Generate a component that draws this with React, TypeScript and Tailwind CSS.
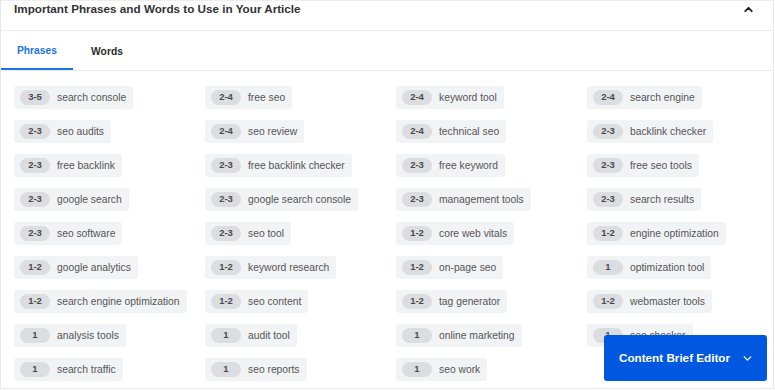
import { ChevronDown, ChevronUp } from 'lucide-react';

type Phrase = { range: string; text: string };

const phrases: Phrase[] = [
  { range: '3-5', text: 'search console' },
  { range: '2-4', text: 'free seo' },
  { range: '2-4', text: 'keyword tool' },
  { range: '2-4', text: 'search engine' },
  { range: '2-3', text: 'seo audits' },
  { range: '2-4', text: 'seo review' },
  { range: '2-4', text: 'technical seo' },
  { range: '2-3', text: 'backlink checker' },
  { range: '2-3', text: 'free backlink' },
  { range: '2-3', text: 'free backlink checker' },
  { range: '2-3', text: 'free keyword' },
  { range: '2-3', text: 'free seo tools' },
  { range: '2-3', text: 'google search' },
  { range: '2-3', text: 'google search console' },
  { range: '2-3', text: 'management tools' },
  { range: '2-3', text: 'search results' },
  { range: '2-3', text: 'seo software' },
  { range: '2-3', text: 'seo tool' },
  { range: '1-2', text: 'core web vitals' },
  { range: '1-2', text: 'engine optimization' },
  { range: '1-2', text: 'google analytics' },
  { range: '1-2', text: 'keyword research' },
  { range: '1-2', text: 'on-page seo' },
  { range: '1', text: 'optimization tool' },
  { range: '1-2', text: 'search engine optimization' },
  { range: '1-2', text: 'seo content' },
  { range: '1-2', text: 'tag generator' },
  { range: '1-2', text: 'webmaster tools' },
  { range: '1', text: 'analysis tools' },
  { range: '1', text: 'audit tool' },
  { range: '1', text: 'online marketing' },
  { range: '1', text: 'seo checker' },
  { range: '1', text: 'search traffic' },
  { range: '1', text: 'seo reports' },
  { range: '1', text: 'seo work' },
];

function PhraseChip({ range, text }: Phrase) {
  return (
    <div className="flex h-[23px] items-center rounded-[3px] bg-[#f2f3f5] pl-[6px] pr-[7px]">
      <span className="flex h-[15px] w-[30px] items-center justify-center rounded-full bg-[#dcdde1] text-[9.5px] font-bold text-[#4a4a4a]">
        {range}
      </span>
      <span className="ml-[7px] text-[10.3px] text-[#555]">{text}</span>
    </div>
  );
}

export default function App() {
  return (
    <div className="relative h-[390px] w-[775px] overflow-hidden bg-white font-['Liberation_Sans',Arial,sans-serif]">
      <div className="h-[389px] w-[774px] border border-[#e8e8e8] border-t-[#eeeeee] bg-white">
        <div className="flex h-[30px] items-start justify-between border-b border-[#ececec] pl-[13px] pr-[18px]">
          <h2 className="mt-0 text-[11.7px] font-bold leading-[16px] text-[#333]">
            Important Phrases and Words to Use in Your Article
          </h2>
          <ChevronUp className="mt-[2px] h-[13px] w-[13px] text-[#222]" strokeWidth={3.5} />
        </div>

        <div className="flex h-[40px] border-b border-[#ececec]">
          <button
            type="button"
            className="h-full w-[72px] border-b-2 border-[#1a73e8] pt-[2px] text-[10.3px] font-bold text-[#1a73e8]"
          >
            Phrases
          </button>
          <button type="button" className="h-full w-[68px] pt-[2px] text-[10.3px] font-bold text-[#2b2b2b]">
            Words
          </button>
        </div>

        <div className="grid grid-cols-[repeat(4,191px)] gap-y-[11px] pl-[13px] pt-[15px]">
          {phrases.map((p) => (
            <div key={p.text} className="flex">
              <PhraseChip {...p} />
            </div>
          ))}
        </div>
      </div>

      <button
        type="button"
        className="absolute left-[604px] top-[335px] flex h-[46px] w-[163px] items-center gap-[11px] rounded-[3px] bg-[#0058e0] pl-[15px] text-[11.7px] font-bold text-white"
      >
        Content Brief Editor
        <ChevronDown className="h-[13px] w-[13px]" strokeWidth={2.5} />
      </button>
    </div>
  );
}
